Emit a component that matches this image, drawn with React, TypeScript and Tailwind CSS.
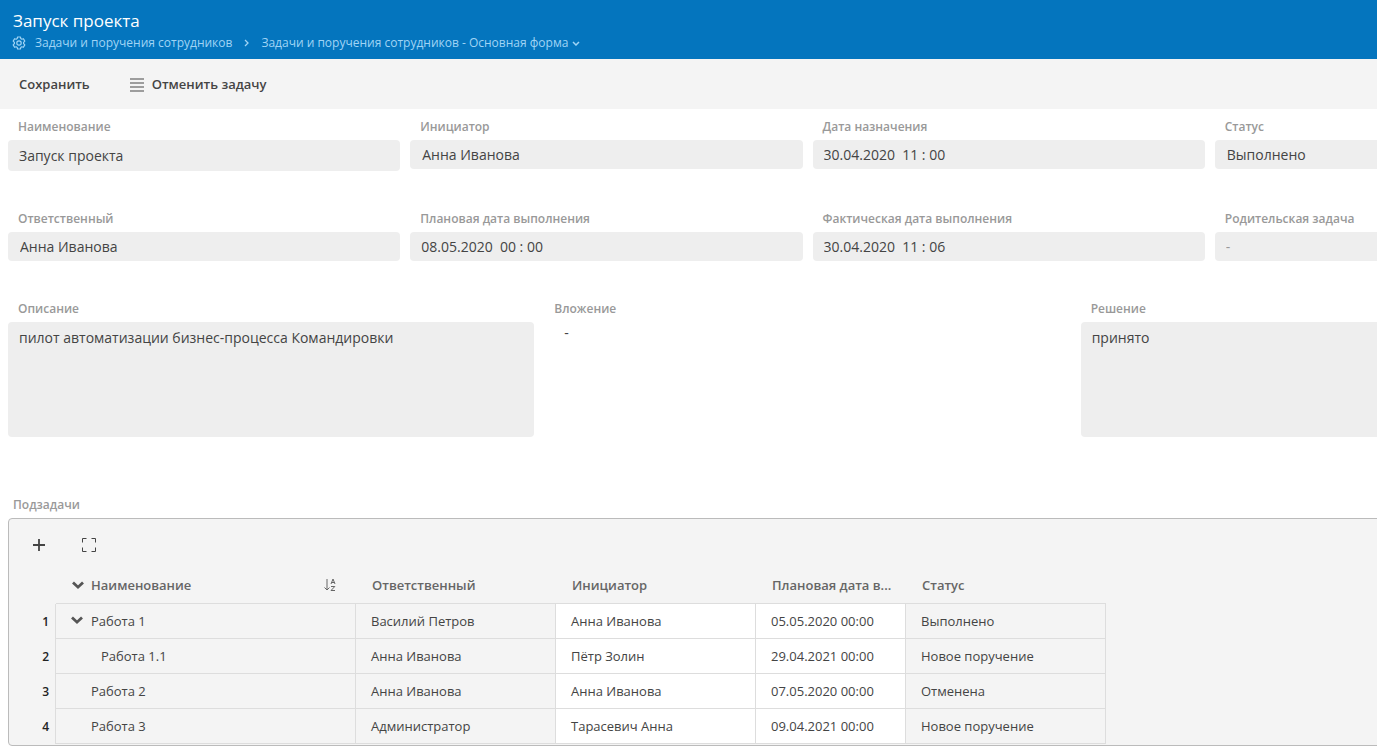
import React, { useState } from 'react';

interface FieldProps {
  id: string;
  label: string;
  value: string;
  className?: string;
}

interface Subtask {
  name: string;
  level: number;
  expandable?: boolean;
  assignee: string;
  initiator: string;
  planned: string;
  status: string;
}

const SUBTASKS: Subtask[] = [
  { name: 'Работа 1', level: 0, expandable: true, assignee: 'Василий Петров', initiator: 'Анна Иванова', planned: '05.05.2020 00:00', status: 'Выполнено' },
  { name: 'Работа 1.1', level: 1, assignee: 'Анна Иванова', initiator: 'Пётр Золин', planned: '29.04.2021 00:00', status: 'Новое поручение' },
  { name: 'Работа 2', level: 0, assignee: 'Анна Иванова', initiator: 'Анна Иванова', planned: '07.05.2020 00:00', status: 'Отменена' },
  { name: 'Работа 3', level: 0, assignee: 'Администратор', initiator: 'Тарасевич Анна', planned: '09.04.2021 00:00', status: 'Новое поручение' },
];

const GearIcon = () => (
  <svg width="14" height="14" viewBox="0 0 14 14" fill="none" stroke="currentColor" strokeWidth="1.2" strokeLinejoin="round">
    <path d="M5.6 1h2.8l.4 1.6 1 .6 1.6-.5 1.4 2.4-1.2 1.2v1.4l1.2 1.2-1.4 2.4-1.6-.5-1 .6-.4 1.6H5.6l-.4-1.6-1-.6-1.6.5-1.4-2.4 1.2-1.2V6.3L1.2 5.1l1.4-2.4 1.6.5 1-.6z" />
    <circle cx="7" cy="7" r="2.2" />
  </svg>
);

const Chevron = () => (
  <svg width="12" height="9" viewBox="0 0 12 9" fill="none" stroke="#555" strokeWidth="2.8">
    <path d="M1 1.500l5 4.700 5-4.700" />
  </svg>
);

const SortIcon = () => (
  <svg width="12" height="14" viewBox="0 0 12 14" fill="none" stroke="currentColor">
    <path d="M3 1v11M.5 9.5L3 12l2.5-2.5" />
    <path d="M7 6l2-5 2 5M7.5 4.500h3M7 8.500h3.800L7 12.500h4" />
  </svg>
);

const Label = ({ htmlFor, children }: { htmlFor: string; children: React.ReactNode }) => (
  <label htmlFor={htmlFor} className="block pl-2.5 text-xs leading-4 font-semibold text-[#999]">
    {children}
  </label>
);

const Field = ({ id, label, value, className = 'h-[29px] px-3' }: FieldProps) => (
  <div className="flex flex-col gap-[5px]">
    <Label htmlFor={id}>{label}</Label>
    <input id={id} readOnly defaultValue={value} className={`w-full rounded bg-[#eee] text-sm outline-none ${className}`} />
  </div>
);

const TextField = ({ id, label, value }: FieldProps) => (
  <div className="flex flex-col gap-[5px]">
    <Label htmlFor={id}>{label}</Label>
    <textarea id={id} readOnly defaultValue={value} className="block h-[115px] w-full resize-none rounded bg-[#eee] px-[11px] py-1.5 text-sm outline-none" />
  </div>
);

export default function App() {
  const [expanded, setExpanded] = useState(true);
  const rows = SUBTASKS.filter((t) => expanded || t.level === 0);

  return (
    <div className="min-h-screen overflow-hidden bg-white font-['Open_Sans','Noto_Sans',sans-serif] text-[#444]">
      <header className="h-[59px] bg-[#0475be] px-3 pt-2">
        <h1 className="pl-px text-[17px] leading-[25px] text-white">Запуск проекта</h1>
        <nav className="flex items-center pt-0.5 text-xs leading-4 text-[#a0d4f5]">
          <button type="button" aria-label="Настройки" className="mr-[9px]">
            <GearIcon />
          </button>
          <a href="#tasks">Задачи и поручения сотрудников</a>
          <svg className="mx-3" width="5" height="8" viewBox="0 0 5 8" fill="none" stroke="currentColor" strokeWidth="1.3">
            <path d="M1 1l3 3-3 3" />
          </svg>
          <button type="button" className="flex items-center gap-1">
            Задачи и поручения сотрудников - Основная форма
            <svg width="8" height="5" viewBox="0 0 8 5" fill="none" stroke="currentColor" strokeWidth="1.5">
              <path d="M1 1l3 3 3-3" />
            </svg>
          </button>
        </nav>
      </header>

      <div className="flex h-[50px] items-center gap-10 bg-[#f4f4f4] px-[19px] pt-0.5 text-[13px] font-semibold">
        <button type="button">Сохранить</button>
        <button type="button" className="flex items-center gap-2">
          <svg width="14" height="14" viewBox="0 0 14 14" stroke="#808080" strokeWidth="1.5">
            <path d="M0 1h14M0 5h14M0 9h14M0 13h14" />
          </svg>
          Отменить задачу
        </button>
      </div>

      {/* The form is wider than the viewport and runs off the right edge */}
      <main className="w-[calc(100%+238px)] px-2 pt-2.5">
        <section className="grid grid-cols-4 gap-x-2.5">
          <Field id="name" label="Наименование" value="Запуск проекта" className="h-[31px] px-[11px]" />
          <Field id="initiator" label="Инициатор" value="Анна Иванова" />
          <Field id="assigned" label="Дата назначения" value="30.04.2020  11 : 00" className="h-[29px] px-[11px]" />
          <Field id="status" label="Статус" value="Выполнено" />
        </section>

        <section className="mt-10 grid grid-cols-4 gap-x-2.5">
          <Field id="assignee" label="Ответственный" value="Анна Иванова" />
          <Field id="planned" label="Плановая дата выполнения" value="08.05.2020  00 : 00" className="h-[29px] px-[11px]" />
          <Field id="actual" label="Фактическая дата выполнения" value="30.04.2020  11 : 06" className="h-[29px] px-[11px]" />
          <Field id="parent" label="Родительская задача" value="-" className="h-[29px] px-[11px] text-[#999]" />
        </section>

        <section className="mt-10 grid grid-cols-3 gap-x-2.5">
          <TextField id="description" label="Описание" value="пилот автоматизации бизнес-процесса Командировки" />
          <div>
            <Label htmlFor="attachment">Вложение</Label>
            <output id="attachment" className="block px-5 pt-1.5 text-sm">-</output>
          </div>
          <TextField id="decision" label="Решение" value="принято" />
        </section>

        <section className="mt-15">
          <h2 className="pl-[5px] text-xs leading-4 font-semibold text-[#999]">Подзадачи</h2>
          <div className="mt-[5px] rounded border border-[#bbb] bg-[#f4f4f4] pb-px">
            <div className="flex h-[49px] items-center gap-9 px-[23px] pt-0.5">
              <button type="button" aria-label="Добавить">
                <svg width="14" height="14" viewBox="0 0 14 14" stroke="#444" strokeWidth="1.8">
                  <path d="M7 1v12M1 7h12" />
                </svg>
              </button>
              <button type="button" aria-label="На весь экран">
                <svg width="14" height="14" viewBox="0 0 14 14" fill="none" stroke="#444">
                  <path d="M.5 4.5v-4h4M9.5.5h4v4M13.5 9.5v4h-4M4.5 13.5h-4v-4" />
                </svg>
              </button>
            </div>

            <table className="w-[1097px] table-fixed border-separate border-spacing-0 text-left text-[13px]">
              <colgroup>
                <col className="w-[47px]" />
                <col className="w-[300px]" />
                <col className="w-[200px]" />
                <col className="w-[200px]" />
                <col className="w-[150px]" />
                <col className="w-[200px]" />
              </colgroup>
              <thead>
                <tr className="h-9 text-[#666] *:border-b *:border-[#ddd] *:p-0 *:font-semibold">
                  <td className="border-b-0!" />
                  <th scope="col">
                    <div className="flex items-center pr-5 pl-4">
                      <button type="button" aria-label="Свернуть все" onClick={() => setExpanded(!expanded)}>
                        <Chevron />
                      </button>
                      <span className="ml-[7px] grow">Наименование</span>
                      <button type="button" aria-label="Сортировка" className="pb-0.5">
                        <SortIcon />
                      </button>
                    </div>
                  </th>
                  <th scope="col"><div className="px-4">Ответственный</div></th>
                  <th scope="col"><div className="px-4">Инициатор</div></th>
                  <th scope="col" title="Плановая дата выполнения"><div className="pl-4 whitespace-nowrap">Плановая дата в...</div></th>
                  <th scope="col"><div className="px-4">Статус</div></th>
                </tr>
              </thead>
              <tbody>
                {rows.map((task, i) => (
                  <tr key={task.name} className="h-[35px] *:border-r *:border-b *:border-[#ddd] *:px-[15px] *:pt-0.5 *:pb-0">
                    <th scope="row" className="border-b-0! px-1.5! pt-0! text-right text-xs font-semibold text-[#222]">
                      {i + 1}
                    </th>
                    <td>
                      <div className={`flex items-center ${task.level ? 'pl-[30px]' : task.expandable ? '' : 'pl-5'}`}>
                        {task.expandable && (
                          <button type="button" aria-label="Свернуть" className="mr-2 pb-1" onClick={() => setExpanded(!expanded)}>
                            <Chevron />
                          </button>
                        )}
                        {task.name}
                      </div>
                    </td>
                    <td>{task.assignee}</td>
                    <td className="bg-white">{task.initiator}</td>
                    <td className="bg-white">{task.planned}</td>
                    <td>{task.status}</td>
                  </tr>
                ))}
              </tbody>
            </table>
          </div>
        </section>
      </main>
    </div>
  );
}
